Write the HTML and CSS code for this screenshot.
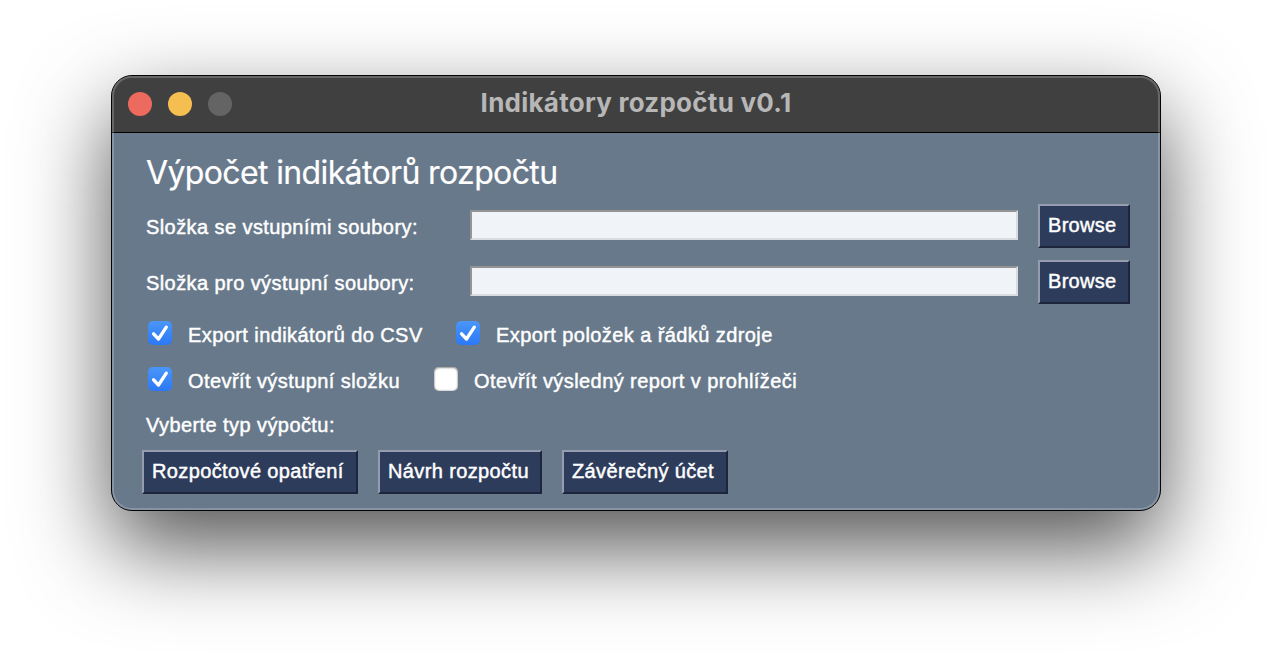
FILE: index.html
```html
<!DOCTYPE html>
<html lang="cs">
<head>
<meta charset="utf-8">
<title>Indikátory rozpočtu v0.1</title>
<link rel="stylesheet" href="styles.css">
</head>
<body>
<main class="window">
  <header class="titlebar">
    <div class="lights"><span class="light close"></span><span class="light minimize"></span><span class="light disabled"></span></div>
    <div class="window-title">Indikátory rozpočtu v0.1</div>
  </header>
  <section class="content">
    <h1 class="heading">Výpočet indikátorů rozpočtu</h1>
    <div class="field">
      <label class="field-label" for="in">Složka se vstupními soubory:</label>
      <input class="path" id="in" type="text">
      <button class="btn browse">Browse</button>
    </div>
    <div class="field">
      <label class="field-label" for="out">Složka pro výstupní soubory:</label>
      <input class="path" id="out" type="text">
      <button class="btn browse">Browse</button>
    </div>
    <div class="options">
      <label class="option option-csv"><span class="box checked"><svg viewBox="0 0 24 24"><path d="M5.6 12.8 10.5 18 18.3 6.2"/></svg></span><span>Export indikátorů do CSV</span></label>
      <label class="option"><span class="box checked"><svg viewBox="0 0 24 24"><path d="M5.6 12.8 10.5 18 18.3 6.2"/></svg></span><span>Export položek a řádků zdroje</span></label>
    </div>
    <div class="options">
      <label class="option option-open"><span class="box checked"><svg viewBox="0 0 24 24"><path d="M5.6 12.8 10.5 18 18.3 6.2"/></svg></span><span>Otevřít výstupní složku</span></label>
      <label class="option"><span class="box"></span><span>Otevřít výsledný report v prohlížeči</span></label>
    </div>
    <p class="prompt">Vyberte typ výpočtu:</p>
    <div class="actions">
      <button class="btn measure">Rozpočtové opatření</button>
      <button class="btn draft">Návrh rozpočtu</button>
      <button class="btn final">Závěrečný účet</button>
    </div>
  </section>
</main>
</body>
</html>
```
FILE: styles.css
```css
* { box-sizing: border-box; }
body {
  margin: 0;
  height: 658px;
  padding: 75px 111px;
  overflow: hidden;
  background: #fff;
  color: #fff;
  font: 20px/24px "Liberation Sans", Arial, sans-serif;
}
.window {
  width: 1050px;
  height: 436px;
  border: 1px solid #050505;
  border-radius: 21px;
  background: #68798b;
  overflow: hidden;
  box-shadow: 0 36px 88px rgba(0, 0, 0, .68);
  position: relative;
}
/* light rim just inside the window edge */
.window::after {
  content: "";
  position: absolute;
  inset: 0;
  border: 2px solid rgba(255, 255, 255, .2);
  border-radius: 20px;
  pointer-events: none;
}
.titlebar {
  height: 57px;
  display: grid;
  grid-template-columns: 120px 1fr 120px;
  align-items: center;
  background: #404040;
  border-bottom: 1px solid #000;
}
.lights { display: flex; gap: 16px; padding-left: 16px; }
.light { width: 24px; height: 24px; border-radius: 50%; flex: none; }
.close { background: #ed6a5f; }
.minimize { background: #f5be50; }
.disabled { background: #646464; }
.window-title {
  text-align: center;
  font: bold 26px/30px Inter, sans-serif;
  letter-spacing: .25px;
  color: #b7b7b7;
  white-space: nowrap;
  padding-bottom: 2px;
}
.content {
  padding: 20px 30px 0;
  white-space: nowrap;
  letter-spacing: .42px;
  -webkit-text-stroke: .45px #fff;
}
.heading {
  margin: 0 0 11px 4px;
  font: 400 32px/40px Inter, sans-serif;
  letter-spacing: -.63px;
  -webkit-text-stroke: .2px #fff;
}
.field { display: flex; height: 44px; margin-bottom: 12px; }
.field-label { width: 328px; padding: 11px 0 0 4px; }
.path {
  width: 548px;
  height: 30px;
  margin: 6px 20px 0 0;
  padding: 0 4px;
  border: 2px solid;
  border-color: #949494 #d9dbde #d9dbde #949494;
  border-radius: 0;
  background: #f0f3f8;
  outline: none;
}
.btn {
  height: 44px;
  padding: 0 0 2px 8px;
  border: 2px solid;
  border-color: #959cad #1c253b #1c253b #959cad;
  border-radius: 0;
  background: #2e3c5c;
  color: #fff;
  font: inherit;
  letter-spacing: .38px;
  text-align: left;
  -webkit-text-stroke: .45px #fff;
}
.browse { width: 92px; letter-spacing: .3px; }
.options { display: flex; height: 24px; padding-left: 6px; margin: 17px 0 22px; }
.options + .options { margin: 0 0 22px; }
.option { display: flex; gap: 16px; line-height: 28px; }
.option-csv { width: 308px; }
.option-open { width: 286px; }
.box {
  width: 24px;
  height: 24px;
  border-radius: 5px;
  background: #fff;
  box-shadow: inset 0 0 2px #777, inset 0 1px 2px #aaa;
}
.checked { background: linear-gradient(#4a96f8, #2b78f6); box-shadow: none; }
.box svg { display: block; width: 24px; height: 24px; }
.box path { fill: none; stroke: #fff; stroke-width: 3.3; stroke-linecap: round; stroke-linejoin: round; }
.prompt { margin: 0 0 13px 4px; }
.actions { display: flex; gap: 20px; }
.measure { width: 216px; }
.draft { width: 164px; }
.final { width: 166px; }
```
